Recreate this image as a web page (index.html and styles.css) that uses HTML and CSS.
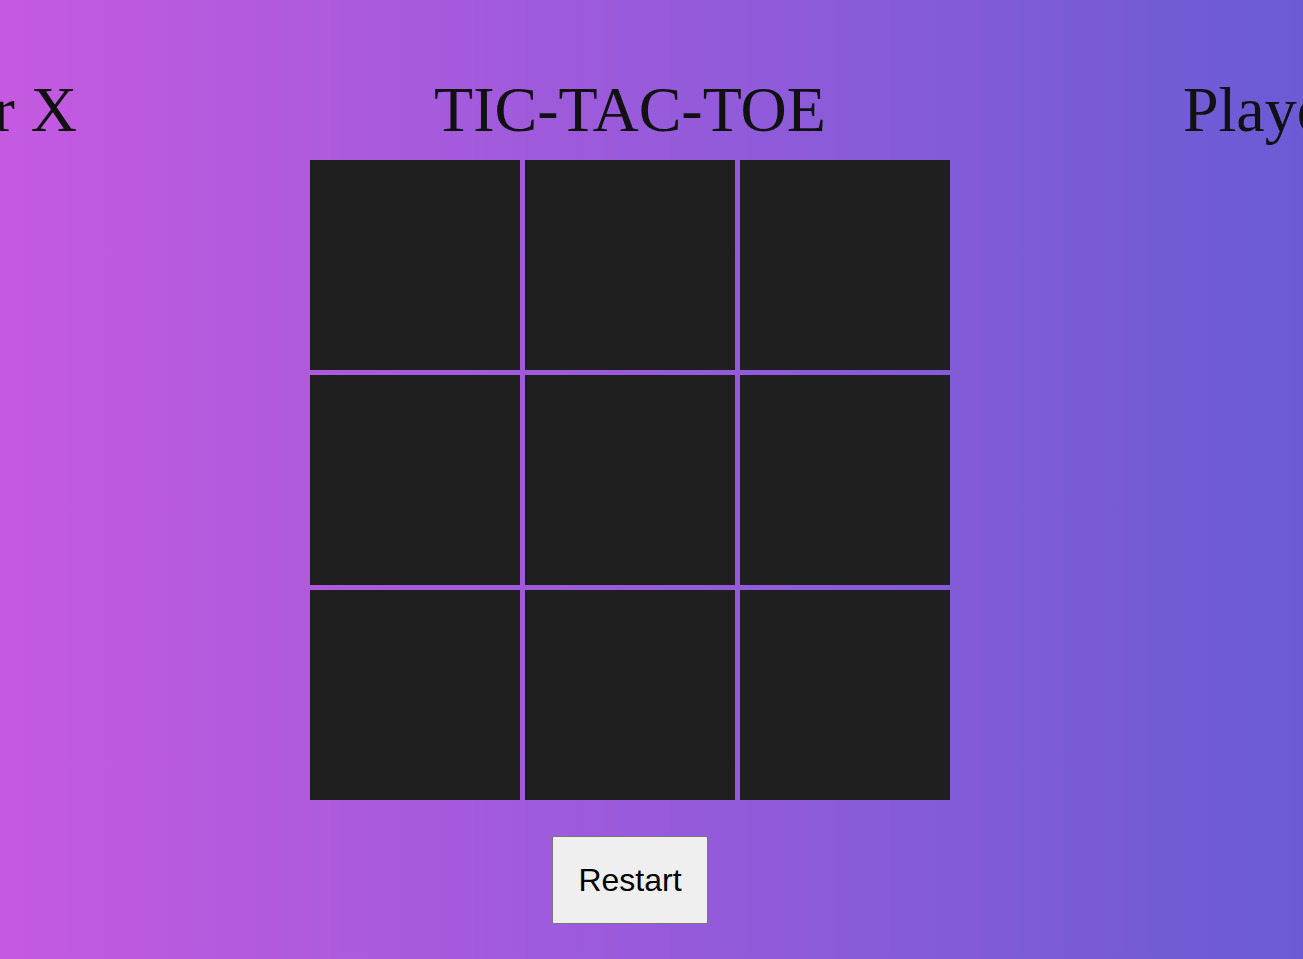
FILE: index.html
```html
<!DOCTYPE html>
<html lang="en">
<head>
  <meta charset="UTF-8">
  <meta name="viewport" content="width=device-width, initial-scale=1.0">
  <title>Tic-Tac-Toe</title>
  <link rel="stylesheet" href="styles.css">
</head>
<body>

<main class="game">
  <div class="scoreboard">
    <h2 class="player">Player X</h2>
    <h1 class="title">TIC-TAC-TOE</h1>
    <h2 class="player">Player O</h2>
  </div>

  <div class="board">
    <div class="cell"></div>
    <div class="cell"></div>
    <div class="cell"></div>
    <div class="cell"></div>
    <div class="cell"></div>
    <div class="cell"></div>
    <div class="cell"></div>
    <div class="cell"></div>
    <div class="cell"></div>
  </div>

  <button class="restart">Restart</button>
</main>

</body>
</html>
```

FILE: styles.css
```css
html, body {
  margin: 0;
  padding: 0;
  height: 100%;
  overflow: hidden;
}
body {
  font-family: "Liberation Serif", "Times New Roman", serif;
  background: linear-gradient(to right, #c45ae0, #6a5bd5);
  color: #111;
}
.game {
  width: 1260px;
  display: flex;
  flex-direction: column;
  align-items: center;
}
.scoreboard {
  display: flex;
  gap: 357px;
  margin-top: 73px;
  margin-bottom: 0;
  height: 87px;
  white-space: nowrap;
}
.title, .player {
  font-size: 64px;
  font-weight: normal;
  margin: 0;
}
.board {
  display: grid;
  grid-template-columns: repeat(3, 210px);
  grid-template-rows: repeat(3, 210px);
  gap: 5px;
}
.cell {
  background-color: #1f1f1f;
}
.restart {
  margin-top: 36px;
  font-family: "Liberation Sans", Arial, sans-serif;
  font-size: 32px;
  padding: 25px 25px 24px;
  background-color: #efefef;
  color: #000;
  border: 1px solid #767676;
  border-radius: 2px;
}
```
